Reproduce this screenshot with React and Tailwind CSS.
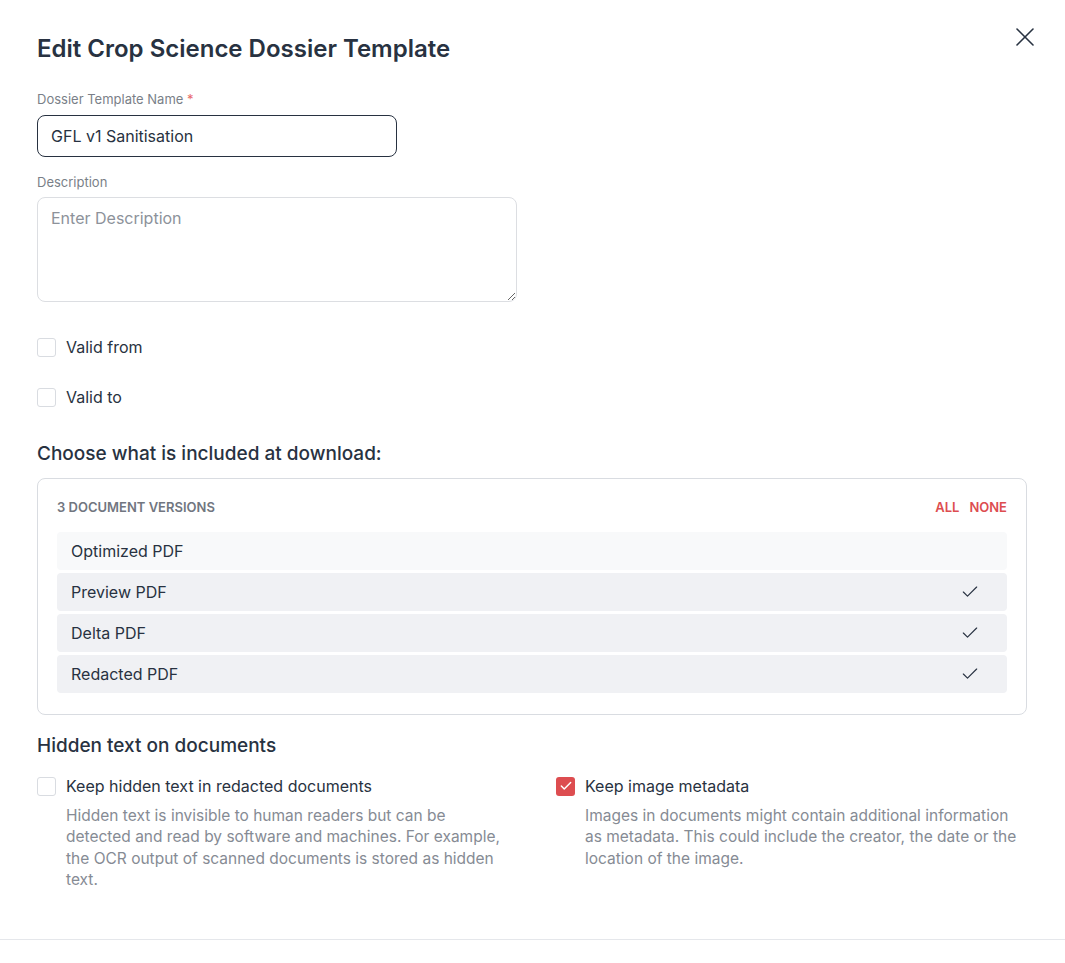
import { X, Check } from 'lucide-react'

// ── Data ──────────────────────────────────────────────────────────────────────

const versions = [
  { name: 'Optimized PDF', checked: false },
  { name: 'Preview PDF',   checked: true },
  { name: 'Delta PDF',     checked: true },
  { name: 'Redacted PDF',  checked: true },
]

// ── Small pieces ──────────────────────────────────────────────────────────────

function Box({ checked }) {
  return checked ? (
    <span className="flex h-[19px] w-[19px] shrink-0 items-center justify-center rounded-[3px] bg-[#dd4d50]">
      <Check size={14} strokeWidth={2.5} className="text-white" />
    </span>
  ) : (
    <span className="block h-[19px] w-[19px] shrink-0 rounded-[3px] border border-[#d9dce1] bg-white" />
  )
}

function Option({ label, checked, children }) {
  return (
    <div>
      <label className="flex items-center gap-[10px]">
        <Box checked={checked} />
        <span className="text-[16px] leading-[20px] text-[#283241]">{label}</span>
      </label>
      {children && (
        <p className="mt-[9px] ml-[29px] w-[437px] text-[15.5px] leading-[21.3px] text-[#868b94]">
          {children}
        </p>
      )}
    </div>
  )
}

// ── Page ──────────────────────────────────────────────────────────────────────

export default function App() {
  return (
    <div className="min-h-[963px] bg-white font-['Inter',sans-serif] text-[#283241]">
      <div className="relative px-[37px] pt-[33px]">
        <button
          type="button"
          aria-label="Close"
          className="absolute right-[24px] top-[21px] text-[#283241]"
        >
          <X size={32} strokeWidth={1.2} />
        </button>

        <h1 className="text-[24px] font-semibold leading-[32px]">Edit Crop Science Dossier Template</h1>

        <div className="mt-[26px]">
          <label className="block text-[13px] leading-[16px] text-[#7a7f88]">
            Dossier Template Name <span className="text-[#e8696b]">*</span>
          </label>
          <div className="mt-[8px] flex h-[42px] w-[360px] items-center rounded-[8px] border border-[#283241] px-[13px] text-[16px]">
            GFL v1 Sanitisation
          </div>
        </div>

        <div className="mt-[17px]">
          <label className="block text-[13px] leading-[16px] text-[#7a7f88]">Description</label>
          <textarea
            placeholder="Enter Description"
            className="mt-[7px] block h-[105px] w-[480px] rounded-[8px] border border-[#dcdee2] px-[13px] py-[8px] text-[16px] placeholder:text-[#8d929a] outline-none"
          />
        </div>

        <div className="mt-[35px] flex flex-col gap-[30px]">
          <Option label="Valid from" />
          <Option label="Valid to" />
        </div>

        <h2 className="mt-[35px] text-[19px] font-medium leading-[24px]">Choose what is included at download:</h2>

        <div className="mt-[12px] w-[990px] rounded-[8px] border border-[#d9dce1] px-[19px] pt-[20px] pb-[21px]">
          <div className="flex items-center justify-between">
            <span className="text-[13px] font-semibold leading-[16px] text-[#717680]">3 DOCUMENT VERSIONS</span>
            <div className="flex gap-[10px] text-[13px] font-semibold leading-[16px] text-[#dd4d50]">
              <span>ALL</span>
              <span>NONE</span>
            </div>
          </div>
          <ul className="mt-[17px] flex flex-col gap-[3px]">
            {versions.map((v) => (
              <li
                key={v.name}
                className={`flex h-[38px] items-center justify-between rounded-[4px] pl-[14px] pr-[27px] text-[16px] ${v.checked ? 'bg-[#f0f1f4]' : 'bg-[#f8f9fa]'}`}
              >
                <span>{v.name}</span>
                {v.checked && <Check size={20} strokeWidth={1.4} className="text-[#283241]" />}
              </li>
            ))}
          </ul>
        </div>

        <h2 className="mt-[19px] text-[19px] font-medium leading-[24px]">Hidden text on documents</h2>

        <div className="mt-[18px] flex">
          <div className="w-[519px]">
            <Option label="Keep hidden text in redacted documents">
              Hidden text is invisible to human readers but can be detected and read by software and machines. For example, the OCR output of scanned documents is stored as hidden text.
            </Option>
          </div>
          <div>
            <Option label="Keep image metadata" checked>
              Images in documents might contain additional information as metadata. This could include the creator, the date or the location of the image.
            </Option>
          </div>
        </div>
      </div>

      <div className="mt-[49px] border-t border-[#e5e7eb]" />
    </div>
  )
}
